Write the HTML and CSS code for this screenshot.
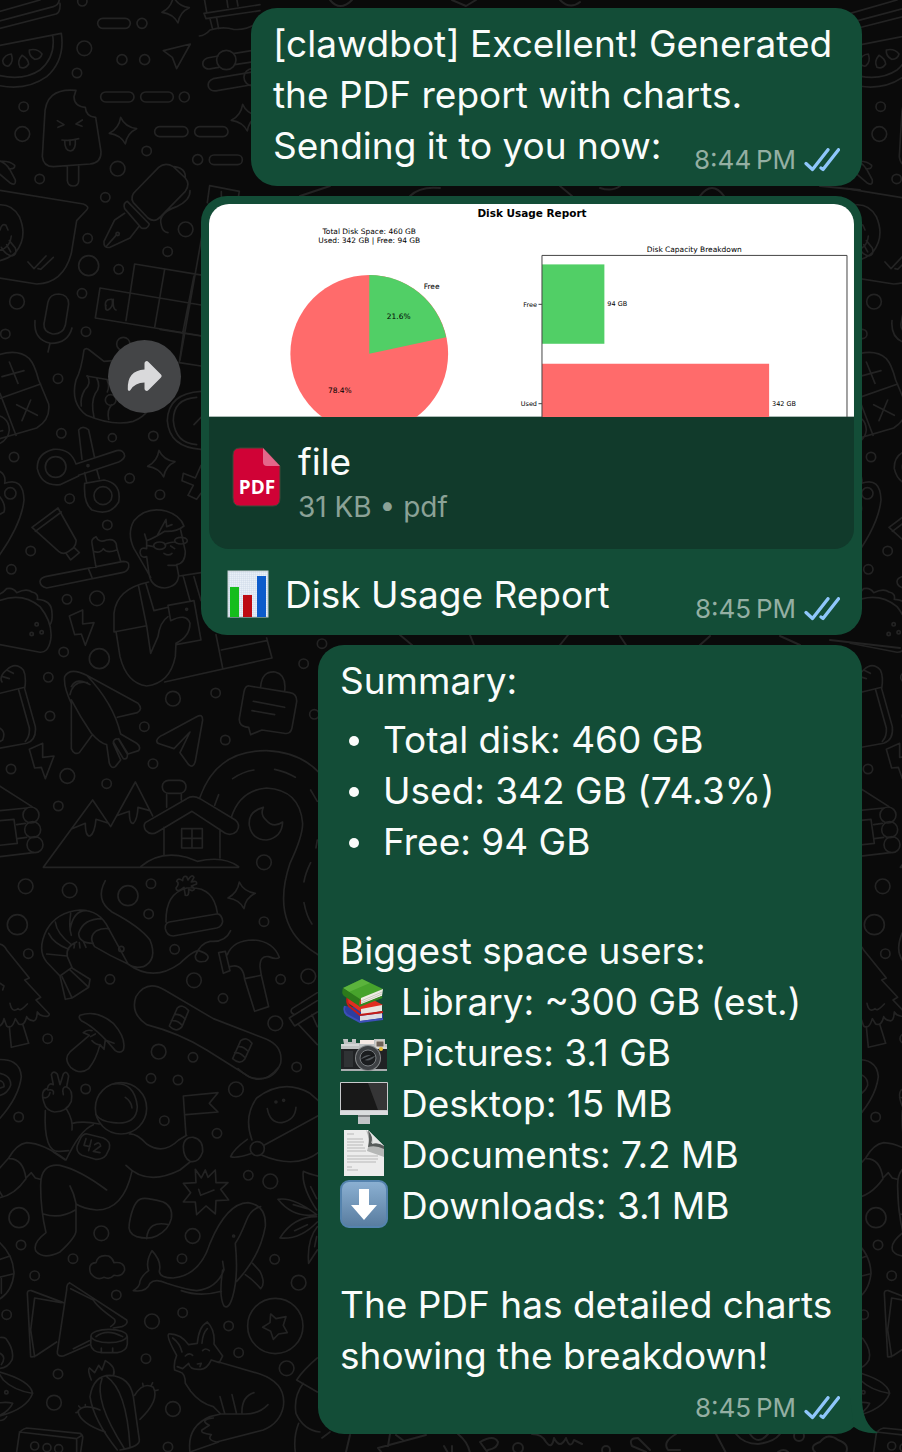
FILE: index.html
```html
<!DOCTYPE html>
<html lang="en">
  <head>
    <meta charset="UTF-8" />
    <meta name="viewport" content="width=device-width, initial-scale=1.0" />
    <title>Chat</title>
    <link rel="stylesheet" href="styles.css">
  </head>
  <body>
    <!-- Shared shapes -->
    <svg class="defs" width="0" height="0" aria-hidden="true">
      <defs>
        <symbol id="ticks" viewBox="0 0 36 24">
          <path d="M2 15.500 8.500 21.500 24 1.700M17 20 19 21.500 34.500 1.700" fill="none" stroke="#8fc6fb" stroke-width="3.300" stroke-linecap="round" stroke-linejoin="round" />
        </symbol>
        <path id="star" d="M-7-39Q6-10 41-5Q12 8 7 41Q-6 14-41 9Q-12-6-7-39Z" />
        <path id="bolt" d="M-38-34 2-52 2-10 36-14 10 54-2 20-22 22Z" />
        <g id="doodles">
          <g transform="scale(.3333)">
            <path d="M-20 68 160 20Q180 14 178-10M-20 90 168 42Q182 36 180 10M-20 40 120 0" />
            <path d="M-30 142 184 100Q196 180 140 230Q70 280-30 250M158 106Q168 170 120 210Q60 250-30 218" />
            <path d="M34 162Q14 164 8 182Q10 200 26 198Q42 186 34 162ZM66 166Q50 184 60 202Q76 208 86 192Q84 176 66 166ZM88 150Q86 168 104 178Q122 178 126 162Q112 144 88 150Z" />
            <path d="M228 271Q134 262 134 350L127 470Q130 500 160 500L270 492Q304 488 303 455L287 352Q258 350 256 322Q222 318 222 290ZM202 501V542Q204 558 219 558Q236 558 236 542V498M172 362 192 374 174 382M247 360 228 372 246 379M186 420Q210 424 236 416M194 422Q194 452 212 453Q228 450 226 420M210 422V435" />
            <path d="M490 152 571 132 530 206 517 172ZM612 40 780 14M618 56 780 32M612 40 618 56M620 36 612-10M684 22 680-5M714 18 710-5M630 56 638 88M650 54 656 86M598 108Q616 106 630 90Q670 78 700 88Q736 92 770 70" />
            <path d="M780 148 704 160M654 168 622 174Q604 182 610 198Q618 210 634 206L656 202M704 194 780 182M780 212 640 236Q620 244 626 262Q634 276 652 272L780 250" />
            <circle cx="679" cy="180" r="29" /><circle cx="758" cy="232" r="26" />
            <path d="M410 570 476 502Q496 486 520 500L556 534Q572 552 556 574L482 650Q464 670 444 654L400 608Q388 590 410 570ZM382 604 448 672Q442 690 424 684L374 626Q368 610 382 604ZM374 640 344 660 312 724Q310 746 330 742L390 714 416 680M320 738 350 704M522 500Q558 504 556 534M570 572Q572 600 530 620Q472 640 484 676Q488 696 504 698" />
            <circle cx="353" cy="702" r="5" />
            <path d="M-20 478Q10 480 28 506L46 540Q48 558 32 550L-20 506M0 484Q30 482 44 496Q46 508 26 506" />
            <path d="M-30 566 250 612Q270 620 260 630L230 662 214 760Q190 850 110 852L-30 830" />
            <path d="M-30 620Q30 600 58 650Q84 710 48 756Q20 784-30 786M0 690Q6 668 18 676L24 690M-10 752Q30 748 34 708M28 722 46 744Q52 764 36 768Q16 764 4 742M20 734 32 756M84 786 102 806 138 768M114 806 122 808 160 772" />
            <path d="M622 608 629 557 718 574 712 610M664 575V590M609 690 540 1080M404 792 610 826M300 864 608 916M286 954 608 1008M404 792 378 962M494 808 464 982M300 864 286 954M582 828 548 1000M318 926Q310 896 336 898Q342 920 324 930Q314 932 318 916M340 898Q338 928 348 930" />
            <path d="M176 882Q206 884 206 912L196 976Q188 1004 158 1002Q130 996 132 972L144 906Q150 882 176 882ZM105 962Q100 1020 152 1030Q204 1030 216 984M150 1030 144 1056" />
          </g>
          <g class="dots" transform="scale(.3333)">
            <use href="#star" x="369" y="391" /><use href="#star" x="735" y="352" /><use href="#star" x="527" y="28" />
            <rect x="293" y="55" width="98" height="30" rx="15" /><rect x="302" y="276" width="100" height="30" rx="15" /><rect x="422" y="276" width="98" height="30" rx="15" />
            <rect x="464" y="380" width="100" height="30" rx="15" /><rect x="584" y="380" width="100" height="30" rx="15" /><rect x="628" y="465" width="99" height="29" rx="14" />
            <circle cx="247" cy="4" r="14" /><circle cx="426" cy="70" r="15" /><circle cx="366" cy="179" r="15" /><circle cx="434" cy="179" r="15" /><circle cx="231" cy="219" r="14" />
            <circle cx="71" cy="320" r="14" /><circle cx="553" cy="291" r="15" /><circle cx="440" cy="453" r="14" /><circle cx="593" cy="479" r="15" /><circle cx="119" cy="537" r="14" />
            <circle cx="316" cy="592" r="14" /><circle cx="263" cy="715" r="14" /><circle cx="356" cy="808" r="14" /><circle cx="246" cy="880" r="14" /><circle cx="503" cy="755" r="14" />
            <circle cx="16" cy="1002" r="14" /><circle cx="258" cy="995" r="14" /><circle cx="253" cy="145" r="22" /><circle cx="67" cy="402" r="22" /><circle cx="353" cy="506" r="22" />
            <circle cx="557" cy="688" r="22" /><circle cx="51" cy="905" r="22" /><circle cx="370" cy="1032" r="20" /><circle cx="266" cy="797" r="30" />
          </g>

          <g transform="translate(0 330) scale(.3333)">
            <path d="M-20 80Q50 52 88 86Q104 104 116 150L146 222Q152 268 110 294L-20 332M-20 212 122 162M0 190 48 316M28 96 54 160M6 140 72 122M92 210 66 272M50 224 112 256M-30 256Q26 252 28 300Q24 340-30 350M-10 306 8 302" />
            <path d="M252 60Q244 120 228 150Q210 220 260 256Q340 290 400 274Q430 262 445 240M252 60Q258 52 268 60L312 94 340 92M260 138 330 150M262 138Q276 160 254 180Q240 204 244 228M290 144Q304 170 286 190Q272 216 282 262M322 152Q330 170 322 186M336 224Q320 240 326 268" />
            <circle cx="332" cy="210" r="16" />
            <path d="M603 184Q504 190 502 272Q508 352 603 358M590 202Q520 206 520 272Q526 340 590 344M603 262 582 284M480-2 603 18M552 0 538 98 603 108" />
            <path d="M236 300Q248 284 266 300L284 384M236 300 246 388M228 402 350 362Q372 358 374 378Q372 388 356 396L236 436M228 402Q212 354 160 358Q110 370 112 416Q124 470 180 464L236 438M254 428 260 458M290 418 298 446M254 460Q250 520 276 540Q330 560 356 516Q366 460 312 450Z" />
            <circle cx="167" cy="411" r="31" /><circle cx="309" cy="497" r="27" /><circle cx="264" cy="407" r="3" />
            <path d="M96 592 174 534 228 630Q230 642 220 654L206 664Q190 676 176 664ZM106 604 184 546M222 652 238 668 212 690 198 670M603 406 586 444 550 430 546 452 580 466 564 496 590 508 603 490" />
            <path d="M-10 420Q20 430 14 460Q70 440 72 510Q64 590-20 700M-10 490Q20 520 12 546L-20 564" />
            <circle cx="31" cy="490" r="17" />
            <path d="M288 712 276 640Q272 628 288 620Q296 640 320 630Q350 624 350 652L362 694M280 664Q300 672 310 656Q320 672 350 660M136 740 370 694Q390 694 386 712Q382 726 366 728L140 774Q120 770 120 754Q122 744 136 740ZM266 718 276 742" />
            <path d="M452 742Q420 686 402 656Q380 610 402 572Q440 528 500 544Q540 556 552 588Q530 606 494 604Q460 626 440 632L434 612M472 616 498 568 500 590 516 584M440 632 440 656Q420 650 420 668Q424 686 440 680L446 724Q450 772 494 774Q534 770 536 736L530 704Q556 700 556 664L542 600M504 706 528 706M492 670Q506 680 516 670M440 646 462 650M494 644Q506 636 526 636M512 648 524 656" />
            <ellipse cx="479" cy="647" rx="18" ry="11" /><ellipse cx="543" cy="632" rx="19" ry="10" />
            <path d="M538 738 603 728M550 740 570 812M446 756Q350 776 342 850L342 906 436 888M348 904 360 980Q380 1060 440 1068Q510 1060 526 980L528 940Q570 920 570 880Q560 848 512 872L504 826 582 812 603 930 528 944M416 770 440 888 452 970 474 920Q480 876 504 860M438 762 462 842 504 832M582 740 603 812M494 1056 816 984 800 924M648 914 668 1014M664 960 800 932" />
            <circle cx="560" cy="838" r="3" />
            <path d="M-20 790Q0 800 20 776Q40 772 50 788Q80 774 96 786Q116 790 112 808Q156 810 156 850Q158 874 150 884M-20 820Q60 780 120 830Q160 880 152 930Q144 972 116 966L-20 940" />
            <circle cx="110" cy="883" r="5" /><circle cx="95" cy="912" r="5" /><circle cx="125" cy="907" r="5" />
            <path d="M6 1056Q-4 1040 20 1020Q46 994 70 1020Q80 1040 74 1076L106 1190Q110 1230 80 1240L-20 1258M0 1090 74 1072M56 1080 88 1194Q90 1220 76 1234M20 1020 40 1030M8 1040 28 1046M-10 1190Q20 1200 8 1230L-10 1240" />
            <path d="M214 1120Q190 1070 194 1040Q210 1010 260 1036L414 1120Q430 1138 412 1148L352 1162M260 1036Q340 1120 362 1212M214 1110Q240 1160 274 1210Q300 1240 320 1244M214 1120V1256Q222 1276 238 1268L276 1216M210 1094Q220 1050 262 1058M214 1070Q230 1040 270 1064M320 1244 328 1300Q334 1318 346 1310L362 1290 340 1240M362 1212 410 1240Q424 1250 416 1262L384 1272 356 1226M340 1236Q344 1224 356 1228L382 1272Q384 1290 370 1286Z" />
            <path d="M782 1070Q786 1022 826 1026Q860 1034 854 1084M748 1068 870 1088Q892 1092 890 1116L876 1194Q872 1214 852 1210L786 1200 752 1214 746 1192Q716 1190 718 1166L732 1086Q736 1066 748 1068ZM760 1114 854 1132M756 1142 824 1154" />
          </g>
          <g class="dots" transform="translate(0 330) scale(.3333)">
            <use href="#star" x="484" y="400" /><use href="#bolt" x="246" y="892" />
            <circle cx="174" cy="146" r="14" /><circle cx="184" cy="310" r="14" /><circle cx="337" cy="323" r="12" /><circle cx="460" cy="318" r="14" /><circle cx="42" cy="381" r="14" />
            <circle cx="389" cy="445" r="14" /><circle cx="209" cy="506" r="14" /><circle cx="480" cy="494" r="14" /><circle cx="322" cy="585" r="14" /><circle cx="92" cy="663" r="14" />
            <circle cx="34" cy="718" r="14" /><circle cx="201" cy="808" r="14" /><circle cx="191" cy="966" r="14" /><circle cx="145" cy="1042" r="14" /><circle cx="647" cy="1089" r="14" />
            <circle cx="966" cy="941" r="14" /><circle cx="911" cy="1001" r="14" /><circle cx="291" cy="805" r="22" /><circle cx="519" cy="1106" r="22" /><circle cx="298" cy="986" r="30" />
          </g>

          <g transform="translate(0 700) scale(.3333)">
            <path d="M470 122Q474 110 490 104L590 50Q608 40 608 60L586 184Q580 206 566 194L540 158 570 96 522 146 480 132Q470 130 470 122Z" />
            <path d="M130 502 278 300 332 380 406 246 458 348M216 386 256 370Q256 410 270 408Q284 400 288 358L326 370M354 346 388 334Q388 372 400 370Q412 360 414 322L450 332M130 502H716M422 500Q480 450 560 472L592 484Q670 466 716 500" />
            <path d="M436 368 560 296Q578 284 600 296L706 360Q724 376 710 394Q696 408 676 400L576 334 472 396Q452 408 438 392Q428 378 436 368ZM492 382V464M660 388V474M500 322V282M544 300V282M545 386H607V444H545ZM576 386V444M545 415H607" />
            <rect x="487" y="241" width="71" height="39" rx="19" />
            <path d="M600 292Q650 150 800 152Q900 156 960 220M694 352Q720 270 800 264Q900 270 908 370Q908 410 870 490Q820 640 900 724Q930 750 960 768M698 236Q730 214 762 210M824 208Q860 216 886 232M644 316 656 284M932 270 952 304M932 488Q916 520 912 546M912 608Q920 650 936 672M952 420 948 444" />
            <path d="M790 322Q744 334 748 376Q756 420 800 420Q846 412 848 366Q820 386 798 360Q780 344 790 322Z" />
            <path d="M-20 246 96 320M-20 334 80 324M-20 364 42 358 52 430-20 438M50 374 76 370M52 416 80 412M-20 472 100 458" />
            <circle cx="93" cy="345" r="24" /><circle cx="98" cy="389" r="24" /><circle cx="105" cy="434" r="24" />
            <path d="M498 666Q496 580 560 564Q640 556 652 638M508 666 650 642Q664 640 668 664Q666 680 650 684L520 708Q500 708 496 686Q494 670 508 666ZM552 562Q530 580 528 564Q540 550 530 544Q534 532 548 542Q548 526 560 530L564 540Q576 520 582 532L574 546Q592 540 590 552L574 558Q590 568 576 572L566 568Q568 590 556 586Z" />
            <path d="M316 542Q284 600 336 636Q420 680 450 720Q474 780 430 800Q400 806 384 792M384 792Q330 768 284 740Q264 710 290 692Q306 684 326 686L384 792M384 792Q460 848 540 790Q580 752 596 752Q640 766 616 784Q586 790 586 768Q600 730 630 724Q676 728 692 692" />
            <circle cx="364" cy="747" r="8" />
            <path d="M326 686Q300 630 240 630Q170 636 140 690Q110 750 140 786L180 828 216 802 202 770Q196 740 230 726M140 762 202 768M146 700Q160 730 206 748M166 666Q170 700 214 734M212 640Q206 680 214 706M280 730Q236 730 236 700Q250 656 306 656M260 632Q220 630 210 690M224 730 222 744M238 728 240 744M250 724 258 742M180 828 196 898 216 894 186 830M216 894 266 862 270 838 216 804M266 862 210 810" />
            <path d="M656 758 676 754 690 812 670 820ZM682 764Q700 720 760 720Q820 724 838 772Q830 780 806 770Q780 766 780 800L784 826 806 920 764 934 734 838Q730 796 700 798L690 800M734 836 784 826" />
            <path d="M-20 732Q10 728 20 750L88 834 74 840 122 892 108 900 148 942Q148 952 130 948Q118 946 112 936Q110 966 98 962Q84 960 80 950Q74 980 56 972L46 956Q36 990 20 978L12 956Q8 980-10 980M30 910Q36 940 54 926Q60 936 82 912M0 850 12 858 8 870M28 980 34 1042 86 1030 68 972" />
            <path d="M494 870 640 956 800 1018Q850 1040 842 1090Q820 1150 750 1132L620 1050Q540 1000 440 974Q390 940 408 890Q440 838 494 870ZM532 924Q546 910 566 932L546 980Q530 1000 508 978ZM524 944Q540 940 556 958M514 962Q534 960 546 976M722 1022Q740 1008 756 1030L734 1078Q720 1096 698 1076ZM714 1040Q730 1038 744 1054M704 1058Q720 1056 734 1072" />
            <path d="M240 946Q290 928 340 970Q380 1016 370 1050Q360 1062 346 1052Q290 984 244 962Q234 954 240 946ZM250 998Q260 988 276 992M250 998 268 1006 210 1056Q190 1076 212 1102Q240 1126 266 1106Q288 1080 300 1034L312 1048 316 1020 342 1030M272 1010 286 1002M276 1022Q290 1036 300 1034" />
            <path d="M952 878 876 926Q868 938 884 944M868 954 952 902M868 954 884 978 952 936M894 972 952 1034M936 944 952 980" />
          </g>
          <g class="dots" transform="translate(0 700) scale(.3333)">
            <use href="#bolt" x="126" y="182" /><use href="#star" x="725" y="585" />
            <circle cx="150" cy="48" r="14" /><circle cx="433" cy="80" r="14" /><circle cx="676" cy="120" r="14" /><circle cx="459" cy="191" r="14" /><circle cx="33" cy="207" r="14" />
            <circle cx="320" cy="251" r="14" /><circle cx="175" cy="318" r="14" /><circle cx="202" cy="228" r="22" /><circle cx="792" cy="487" r="22" /><circle cx="77" cy="559" r="22" />
            <circle cx="209" cy="571" r="22" /><circle cx="384" cy="587" r="30" /><circle cx="52" cy="674" r="30" /><circle cx="453" cy="551" r="14" /><circle cx="446" cy="642" r="14" />
            <circle cx="792" cy="665" r="14" /><circle cx="85" cy="761" r="14" /><circle cx="524" cy="748" r="14" /><circle cx="330" cy="838" r="14" /><circle cx="582" cy="841" r="22" />
            <circle cx="669" cy="895" r="14" /><circle cx="842" cy="838" r="14" /><circle cx="925" cy="829" r="22" /><circle cx="826" cy="970" r="22" /><circle cx="143" cy="1016" r="14" />
            <circle cx="476" cy="1055" r="22" /><circle cx="579" cy="1072" r="14" /><circle cx="890" cy="1101" r="14" /><circle cx="943" cy="43" r="14" />
          </g>

          <g transform="translate(0 1070) scale(.3333)">
            <path d="M-20-30Q60-40 64 20Q56 90-20 166M-20 8Q34 10 32 46Q20 80-20 78M-10 30Q14 32 12 50L-10 58" />
            <path d="M132 98Q120 60 142 56Q146 36 160 44L154 14Q160 0 172 12L180 44 190 12Q200 0 206 18L200 50Q220 60 214 94Q200 126 164 126Q138 122 132 98ZM136 122Q130 250 180 244L206 242M200 118Q220 150 216 180M190 74Q184 50 200 50M144 60Q164 56 160 72M128 82Q146 88 150 68" />
            <circle cx="363" cy="115" r="77" />
            <path d="M340 42Q404 34 412 110Q410 166 340 158Q300 154 288 134M376 82Q394 94 396 114M216 160Q250 152 298 162M280 164Q240 180 198 270Q130 220 80 218Q50 222 26 264L-20 316M196 270 160 246M388 192Q410 190 440 222Q490 256 536 210L560 196M378 286Q440 350 540 300L570 276M396 304Q370 420 290 420Q250 416 228 402M320 360Q240 300 180 286Q120 280 122 350Q122 420 138 488Q96 520 108 544Q130 570 180 546Q230 500 228 480V400Q222 370 210 348M130 432Q180 448 226 420M28 266Q70 266 78 326Q40 380-10 384M78 324 94 308 106 324 122 328M-10 350 8 380" />
            <path d="M262 192 310 204Q334 214 328 236L318 256Q306 270 286 268L246 256Q226 246 232 226L242 204Q250 190 262 192ZM258 206 252 226 270 230M274 210 266 242M284 224Q300 212 302 228L280 244 300 248" />
            <path d="M558 196 550 78 654 68 628 100 654 126 558 134M550 230Q552 200 580 202Q610 208 608 246Q596 280 570 274Q550 262 550 230Z" />
            <path d="M756 210Q730 140 770 84Q850 24 930 70L960 96M960 244Q890 300 786 256M802 116Q810 160 846 158Q886 150 888 112M792 226 960 134M742 208Q700 238 692 260Q710 266 756 250M714-4Q780 60 834-6" />
            <circle cx="772" cy="236" r="21" /><circle cx="828" cy="96" r="3" /><circle cx="851" cy="91" r="3" />
            <path d="M586 298 604 324 616 300 624 322 646 300 648 338 684 338 662 358 686 390 648 392 646 432 618 408 590 434 586 396 550 396 572 368 550 340 588 338ZM596 358 602 376 642 360" />
            <path d="M426 386Q440 382 490 396Q520 410 514 446Q506 480 470 498Q446 510 410 500Q382 490 388 460Q400 390 426 386ZM440 506Q444 450 506 464" />
            <path d="M400 662Q420 650 420 634Q426 616 446 602Q436 576 456 542Q486 574 478 604Q480 624 520 624Q600 616 630 520Q680 400 744 398Q800 406 796 470Q780 560 710 634M400 662Q440 668 450 640Q466 624 500 640Q560 660 590 662Q650 656 672 600L668 574M544 662Q600 682 664 664M668 600Q656 680 672 708Q686 720 698 680Q716 620 706 520Q720 500 740 450Q754 416 782 410M736 614Q760 630 782 656Q798 640 780 604L758 580" />
            <circle cx="701" cy="498" r="3" />
            <path d="M272 610Q262 580 288 578Q294 552 326 558Q338 564 342 578Q374 574 374 600Q366 622 342 616Q330 630 312 622Q290 634 272 610Z" />
            <path d="M960 320Q920 310 910 304Q904 350 950 420M834 388Q880 380 950 434Q880 446 834 388ZM840 504Q880 440 950 440M840 504Q900 510 952 456M952 470Q920 510 926 580L952 540M880 404 922 416M884 482 922 464M932 350 950 386M950 500 944 530M-10 510Q40 550 42 610Q36 670-10 692M-10 572 30 558M-10 624 38 612M4 624V670" />
            <path d="M92 860 82 670Q82 660 94 662L190 698M92 860Q100 862 110 856L170 816M104 860 92 780 104 684 184 698M208 640Q200 640 200 660L172 846Q170 860 190 858L268 824M208 638 380 750Q386 762 366 770L340 774M212 656 280 690Q290 710 344 748Q350 758 332 770M220 836 268 812" />
            <ellipse cx="327" cy="798" rx="54" ry="20" />
            <path d="M273 800 272 824Q276 846 304 848H352Q380 844 382 822V800M288 800Q320 774 368 800M304 834V848M338 834V848" />
            <circle cx="826" cy="768" r="83" />
            <path d="M812 732 828 746 858 740 850 766 862 788 836 792 820 808 812 784 788 772 810 758Z" />
            <path d="M540 906 524 900Q520 880 530 856Q498 800 506 792Q540 790 566 824L592 820Q596 770 622 756Q646 780 642 822L668 858 658 878 634 870Q620 900 600 898Q570 900 566 880L548 896 532 890M518 804Q540 820 546 846M606 820Q608 790 622 776M556 858Q568 846 578 856M608 842Q616 832 628 842M592 882 604 880 600 890M656 876 780 912Q860 940 850 1010Q840 1060 790 1080L650 1116Q620 1110 634 1094Q600 1090 606 1080L628 1066Q596 1050 640 1044M540 906Q556 910 556 940L572 964Q600 1000 640 1010L662 1032H730Q776 1034 804 1004M660 980 674 1030M696 974 710 1032M762 968Q724 980 726 1030M570 1146Q560 1070 630 1040L662 1032M656 1116 570 1146M572 964 570 960" />
            <path d="M352 1140Q280 1050 270 980Q280 916 330 916Q390 920 400 980L418 1110Q420 1130 360 1140M306 926Q280 990 372 1134M320 920Q380 960 390 1130M274 930Q262 900 268 894L284 908 296 886 306 900 316 872Q350 890 340 918M404 976Q430 934 460 952Q480 990 420 1048M430 950 428 940M454 946 458 938M466 962 474 960M316 1086Q240 1060 234 1024Q250 1000 300 1020M236 1026 228 1028M242 1014 236 1008M256 1010V1004" />
            <path d="M-10 804Q10 800 18 806Q44 840 36 870Q20 900-10 894M0 850Q20 860 4 884M-10 904Q90 930 98 970Q80 1020-10 1040M-10 900 10 930Q40 960 96 970M-10 1000Q20 994 38 1000 26 1026-10 1040M-10 1050Q10 1056 20 1040" />
            <circle cx="19" cy="967" r="5" />
            <path d="M50 1146 58 1090Q64 1078 80 1074L240 1090Q250 1096 248 1106L242 1146M58 1086 230 1106V1146M230 1106 246 1096" />
            <path d="M952 864Q910 900 890 930L952 966M910 940Q880 980 888 1030Q910 1080 960 1086M896 1060Q880 1100 886 1146M966 1104 990 1086" />
          </g>
          <g class="dots" transform="translate(0 1070) scale(.3333)">
            <circle cx="453" cy="25" r="14" /><circle cx="534" cy="30" r="14" /><circle cx="257" cy="57" r="14" /><circle cx="56" cy="141" r="14" /><circle cx="493" cy="152" r="14" />
            <circle cx="651" cy="190" r="14" /><circle cx="708" cy="58" r="22" /><circle cx="745" cy="316" r="14" /><circle cx="811" cy="334" r="22" /><circle cx="57" cy="443" r="30" />
            <circle cx="304" cy="490" r="22" /><circle cx="578" cy="498" r="22" /><circle cx="63" cy="525" r="14" /><circle cx="219" cy="566" r="14" /><circle cx="104" cy="617" r="14" />
            <circle cx="546" cy="566" r="14" /><circle cx="824" cy="568" r="14" /><circle cx="896" cy="638" r="22" /><circle cx="349" cy="675" r="14" /><circle cx="20" cy="734" r="14" />
            <circle cx="548" cy="728" r="14" /><circle cx="456" cy="754" r="22" /><circle cx="686" cy="768" r="14" /><circle cx="716" cy="848" r="14" /><circle cx="438" cy="866" r="14" />
            <circle cx="174" cy="912" r="14" /><circle cx="860" cy="895" r="22" /><circle cx="162" cy="998" r="22" /><circle cx="519" cy="1017" r="22" /><circle cx="104" cy="1128" r="12" />
            <circle cx="141" cy="1133" r="12" /><circle cx="176" cy="1136" r="12" /><circle cx="504" cy="1131" r="14" />
          </g>
        </g>
      </defs>
    </svg>

    <main class="chat">
      <svg class="wallpaper" aria-hidden="true">
        <use href="#doodles" />
        <use href="#doodles" x="857" />
        <!-- scraps that show between the bubbles -->
        <g>
          <path d="M330 0Q340 12 352 0M452 0 466 6 476 0M560 0Q570 10 580 2M300 196 330 186M410 196Q420 186 440 188M560 186 572 196M600 188Q612 192 620 186M700 196Q712 180 724 196M820 186 860 190" />
          <path d="M400 635 412 645M470 635 474 645M560 645 568 635M620 636 626 645M700 645 710 636M780 636 800 645M830 640 900 648" />
          <path d="M350 1435 346 1452M390 1434 388 1446M396 1435 404 1441M426 1435 378 1448 382 1453M458 1434Q468 1442 470 1453M444 1446 448 1453M452 1446V1453" />
          <path d="M480 1442 488 1453M480 1442Q494 1434 498 1442Q498 1448 488 1450M532 1434Q542 1434 546 1442Q552 1450 554 1438Q560 1450 566 1438Q570 1450 574 1440L582 1444" />
          <path d="M646 1452 632 1446Q628 1438 638 1438L650 1450M676 1434Q662 1442 668 1450L680 1450M716 1434 726 1453M736 1434Q744 1444 758 1444Q774 1442 780 1434M750 1434Q758 1446 768 1434" />
          <path d="M816 1453Q808 1446 820 1442Q828 1432 838 1440Q850 1444 846 1453M778 1452Q784 1448 788 1452" />
          <circle cx="518" cy="1448" r="5" /><circle cx="606" cy="1450" r="4" /><circle cx="799" cy="1436" r="5" />
        </g>
      </svg>

      <article class="row">
        <div class="bubble bubble-first">
          <p>[clawdbot] Excellent! Generated the PDF report with charts.</p>
          <p>Sending it to you now:</p>
          <div class="meta"><time>8:44&#8201;PM</time><svg class="ticks"><use href="#ticks" /></svg></div>
        </div>
      </article>

      <article class="row">
        <button class="forward" type="button" aria-label="Forward">
          <svg viewBox="0 0 36 32" width="36" height="32">
            <path d="M18.500 1.500Q20 .5 21.500 2L34 14.500Q35.500 16 34 17.500L21.500 30Q20 31.500 18.500 30.500Q17.500 30 17.500 28.500V22.500Q8 22.500 3.500 30Q1.500 32 .8 29.500Q0 10.500 17.500 9.500V3.500Q17.500 2 18.500 1.500Z" fill="#d9d9db" />
          </svg>
        </button>
        <div class="bubble bubble-file">
          <div class="attachment">
            <svg class="preview" viewBox="0 0 1292 426" role="img" aria-label="Disk Usage Report">
              <rect width="1292" height="426" fill="#fff" />
              <text class="chart-title" x="647" y="27" text-anchor="middle">Disk Usage Report</text>
              <text x="321" y="61" text-anchor="middle">Total Disk Space: 460 GB</text>
              <text x="321" y="78" text-anchor="middle">Used: 342 GB | Free: 94 GB</text>
              <circle cx="321" cy="300" r="158" fill="#ff6b6b" />
              <path d="M321 300V142A158 158 0 0 1 475 267Z" fill="#51cf66" />
              <text x="430" y="170">Free</text>
              <text x="380" y="231" text-anchor="middle">21.6%</text>
              <text x="262" y="378" text-anchor="middle">78.4%</text>
              <text x="972" y="96" text-anchor="middle">Disk Capacity Breakdown</text>
              <rect x="667" y="121" width="125" height="159" fill="#51cf66" />
              <rect x="667" y="320" width="455" height="120" fill="#ff6b6b" />
              <path d="M667 440V103H1278V440M660 201H667M660 400H667" fill="none" stroke="#444" stroke-width="2" />
              <g class="chart-ticks">
                <text x="657" y="206" text-anchor="end">Free</text>
                <text x="657" y="405" text-anchor="end">Used</text>
                <text x="798" y="205">94 GB</text>
                <text x="1128" y="404">342 GB</text>
              </g>
            </svg>
            <div class="file">
              <svg viewBox="0 0 50 60" width="50" height="60" aria-hidden="true">
                <path d="M8 1H31L48 19V51Q48 59 41 59H8Q1 59 1 51V8Q1 1 8 1Z" fill="#d00236" stroke="#3c4a38" stroke-width="1" />
                <path d="M31 1 48 19H35Q31 19 31 15Z" fill="#e4668a" />
                <text class="pdf-label" x="25" y="47" text-anchor="middle">PDF</text>
              </svg>
              <div>
                <div class="file-name">file</div>
                <div class="file-info">31 KB • pdf</div>
              </div>
            </div>
          </div>
          <div class="caption">
            <svg viewBox="0 0 42 48" width="42" height="48" aria-hidden="true">
              <defs>
                <pattern id="grid" width="2" height="2" patternUnits="userSpaceOnUse">
                  <rect width="2" height="2" fill="#e9f0f8" /><path d="M0 0H2M0 0V2" stroke="#cbd8e6" stroke-width=".8" />
                </pattern>
              </defs>
              <rect x="1" y="1" width="40" height="46" fill="url(#grid)" stroke="#c3cbd2" />
              <rect x="3" y="17" width="9" height="30" fill="#15bd1c" /><rect x="16" y="25" width="9" height="22" fill="#bd0a12" /><rect x="30" y="6" width="9" height="41" fill="#0d5ccb" />
            </svg>
            <span>Disk Usage Report</span>
          </div>
          <div class="meta"><time>8:45&#8201;PM</time><svg class="ticks"><use href="#ticks" /></svg></div>
        </div>
      </article>

      <article class="row">
        <div class="bubble bubble-summary">
          <p>Summary:</p>
          <ul class="totals">
            <li>Total disk: 460 GB</li>
            <li>Used: 342 GB (74.3%)</li>
            <li>Free: 94 GB</li>
          </ul>
          <p>Biggest space users:</p>
          <ul class="folders">
            <li>
              <svg viewBox="0 0 48 48" aria-hidden="true">
                <path d="M5 30 30 33 43 38V42L19 46 6 38Z" fill="#2c3ea0" />
                <path d="M20 40 42 37V42L20 45Z" fill="#dcdde2" /><path d="M5 30Q3 35 7 39L20 46 43 43" fill="none" stroke="#3c4fb8" stroke-width="2" />
                <path d="M7 21 22 18 43 29 21 36 8 27Z" fill="#e12d20" />
                <path d="M21 33 42 29V35L21 39Z" fill="#e9e5df" /><path d="M8 20Q6 26 9 30L20 39 43 36" fill="none" stroke="#c51c17" stroke-width="2" />
                <path d="M3 12 22 3 43 13 20 24Z" fill="#47a32c" /><path d="M3 12 22 3 30 7 9 16Z" fill="#6fc34b" opacity=".5" />
                <path d="M21 22 43 13 42 20 21 29Z" fill="#f0ede5" /><path d="M21 25 42 16M21 27 42 18" stroke="#c2c0b5" stroke-width=".8" />
                <path d="M3 12Q1 17 4 20L19 30 20 23Z" fill="#2c7a1b" /><path d="M19 30 42 21" stroke="#35891f" stroke-width="2" />
              </svg>
              <span>Library: ~300 GB (est.)</span>
            </li>
            <li>
              <svg viewBox="0 0 48 48" aria-hidden="true">
                <path d="M3 12H8V15H12V12H16V16H20V13H34V12H45V17H47V25H1V17H4Z" fill="#bfc2c3" />
                <path d="M20 13H34V17H20Z" fill="#f5e9e4" /><path d="M36 14H44V20H36Z" fill="#6d6158" stroke="#e0d8cf" /><path d="M1 18H19M35 21H47" stroke="#e9ebec" />
                <rect x="1" y="22" width="46" height="21" fill="#202224" /><path d="M4 24H13V40H4Z" fill="#2f3234" /><path d="M1 42H47V44H1Z" fill="#a9adaf" />
                <circle cx="28" cy="31" r="13" fill="#85888a" /><circle cx="28" cy="31" r="12" fill="#3d4043" /><circle cx="28" cy="31" r="8" fill="#1b1d1f" stroke="#777b7e" />
                <path d="M21 32Q26 26 35 29Q30 36 21 32Z" fill="#54595d" /><path d="M22 33 34 28" stroke="#17191b" stroke-width="2" /><circle cx="41" cy="22" r="2" fill="#e5bd36" />
              </svg>
              <span>Pictures: 3.1 GB</span>
            </li>
            <li>
              <svg viewBox="0 0 48 48" aria-hidden="true">
                <path d="M18 36H30V46H18Z" fill="#c2c4c7" /><path d="M18 36H30V39H18Z" fill="#85878a" />
                <rect x="0" y="4" width="48" height="33" rx="1" fill="#c8cacc" /><rect x="1" y="5" width="46" height="27" fill="#181818" />
                <path d="M28 5H47V32H38Z" fill="#353536" /><path d="M0 33H48V37H0Z" fill="#dbdddf" />
              </svg>
              <span>Desktop: 15 MB</span>
            </li>
            <li>
              <svg viewBox="0 0 48 48" aria-hidden="true">
                <path d="M4 1H28L44 17V47H4Z" fill="#ececec" />
                <path d="M26 1Q31 12 27 22L44 28V17Z" fill="#b5b7b6" /><path d="M28 1Q34 8 31 14Q38 12 44 17L44 20Q36 16 28 18Q30 10 28 1Z" fill="#565b5a" /><path d="M28 1 44 17Q38 13 32 15Q34 8 28 1Z" fill="#e4e6e5" />
                <path d="M7 5H14M7 10H23M7 13H24M7 16H23M7 19H25M7 22H26M7 27H38M7 30H38M7 33H36M7 38H12M7 41H18" stroke="#b8b8b8" stroke-width="1" />
              </svg>
              <span>Documents: 7.2 MB</span>
            </li>
            <li>
              <svg viewBox="0 0 48 48" aria-hidden="true">
                <defs>
                  <linearGradient id="key" x2="0" y2="1"><stop offset="0" stop-color="#8cb1d3" /><stop offset="1" stop-color="#587c9f" /></linearGradient>
                </defs>
                <rect x="1" y="1" width="46" height="46" rx="8" fill="url(#key)" stroke="#5483ae" stroke-width="2" />
                <path d="M19 9H29V25H37L24 40 11 25H19Z" fill="#fff" />
              </svg>
              <span>Downloads: 3.1 MB</span>
            </li>
          </ul>
          <p>The PDF has detailed charts showing the breakdown!</p>
          <div class="meta"><time>8:45&#8201;PM</time><svg class="ticks"><use href="#ticks" /></svg></div>
          <svg class="tail" viewBox="0 0 28 36" aria-hidden="true">
            <path d="M0 0H12Q12 26 28 35Q13 36 4 29Z" fill="#134d37" />
          </svg>
        </div>
      </article>
    </main>
  </body>
</html>
```
FILE: styles.css
```css
* {
  box-sizing: border-box;
}

body {
  margin: 0;
  background: #0a0a0a;
  color: #fafcfb;
  font-family: Inter, "Liberation Sans", sans-serif;
  font-size: 37px;
  line-height: 51px;
}

p,
ul {
  margin: 0;
  padding: 0;
}

p {
  width: fit-content;
}

ul {
  list-style: none;
}

.defs {
  position: absolute;
}

.chat {
  position: relative;
  z-index: 0;
  display: flex;
  flex-direction: column;
  gap: 10px;
  min-height: 100vh;
  padding: 8px 40px 18px 16px;
  overflow: hidden;
}

/* Doodles behind the messages */
.wallpaper {
  position: absolute;
  inset: 0;
  z-index: -1;
  width: 100%;
  height: 100%;
  fill: none;
  stroke: #232323;
  stroke-width: 2;
  stroke-linecap: round;
  stroke-linejoin: round;
}

#doodles {
  stroke-width: 5;
}

.dots {
  fill: #0a0a0a;
}

.row {
  display: flex;
  justify-content: flex-end;
  align-items: center;
  gap: 20px;
}

.bubble {
  position: relative;
  width: 100%;
  padding: 10px 22px 8px;
  border-radius: 26px;
  background: #134d37;
}

.bubble-first {
  max-width: 611px;
}

.bubble-file {
  max-width: 661px;
  padding: 8px;
}

.bubble-summary {
  max-width: 544px;
}

/* Time and read ticks, tucked beside the last line */
.meta {
  display: flex;
  justify-content: flex-end;
  align-items: center;
  gap: 8px;
  margin-top: -29px;
  color: #94afa3;
  font-size: 26px;
  line-height: 36px;
}

.bubble-file .meta {
  padding-right: 14px;
}

.bubble-summary .meta {
  margin-top: 9px;
}

.ticks {
  width: 36px;
  height: 24px;
}

.forward {
  flex: none;
  display: flex;
  justify-content: center;
  align-items: center;
  width: 73px;
  height: 73px;
  margin-bottom: 78px;
  padding: 0;
  border: 0;
  border-radius: 50%;
  background: #444547;
}

/* Document attachment */
.attachment {
  overflow: hidden;
  border-radius: 20px;
  background: #113a2b;
}

.preview {
  display: block;
  width: 100%;
  font-family: "DejaVu Sans", sans-serif;
  font-size: 15px;
}

.chart-title {
  font-size: 21px;
  font-weight: bold;
}

.chart-ticks {
  font-size: 13px;
}

.file {
  display: flex;
  align-items: flex-start;
  gap: 16px;
  height: 132px;
  padding: 19px 23px;
}

.file svg {
  margin-top: 11px;
}

.file-info {
  color: #8ba297;
  font-size: 28px;
  line-height: 40px;
}

.pdf-label {
  fill: #fff;
  font-family: "Open Sans", sans-serif;
  font-size: 19px;
  font-weight: 700;
}

.caption {
  display: flex;
  align-items: center;
  gap: 16px;
  padding: 20px 18px 0;
}

.totals {
  margin: 8px 0 58px;
}

.totals li {
  display: flex;
  align-items: center;
}

.totals li::before {
  content: "";
  width: 10px;
  height: 10px;
  margin: 4px 24px 0 9px;
  border-radius: 50%;
  background: #fafcfb;
}

.folders {
  margin-bottom: 48px;
}

.folders li {
  display: flex;
  align-items: center;
  gap: 13px;
}

.folders svg {
  width: 48px;
  height: 48px;
  margin-bottom: 3px;
}

.tail {
  position: absolute;
  right: -16px;
  bottom: 0;
  width: 28px;
  height: 36px;
}
```
